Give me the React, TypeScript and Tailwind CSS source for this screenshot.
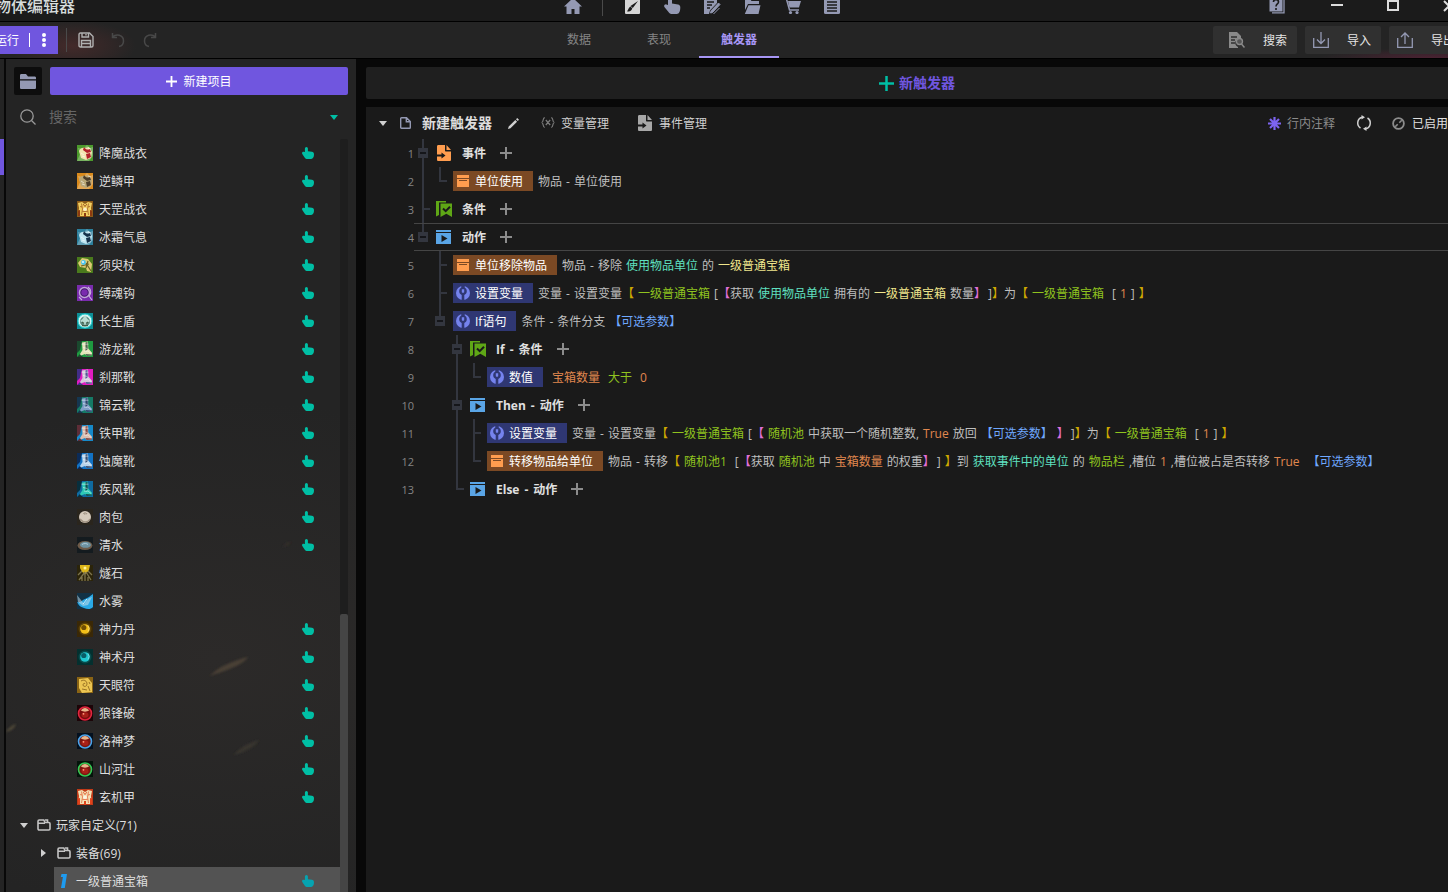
import { useState } from "react";
import type { ReactNode } from "react";

type ItemKind = "armor" | "boot" | "staff" | "ring" | "shield" | "bun" | "bowl" | "spark" | "wave" | "pill" | "scroll" | "orb" | "suit";

type Item = { name: string; kind: ItemKind; bg: string; main: string; accent: string; touch?: boolean };

const items: Item[] = [
  { name: "降魔战衣", kind: "armor", bg: "#4c9a2c", main: "#f3e3b0", accent: "#b3202a" },
  { name: "逆鳞甲", kind: "armor", bg: "#d98a1c", main: "#b9a777", accent: "#4b3d2a" },
  { name: "天罡战衣", kind: "suit", bg: "#8a5a18", main: "#f1cf62", accent: "#8c3a10" },
  { name: "冰霜气息", kind: "armor", bg: "#2c7f9c", main: "#bfe6f2", accent: "#16324c" },
  { name: "须臾杖", kind: "staff", bg: "#4a7a1c", main: "#dccb74", accent: "#49c5f2" },
  { name: "缚魂钩", kind: "ring", bg: "#7a2cae", main: "#c9b4dd", accent: "#3b1560" },
  { name: "长生盾", kind: "shield", bg: "#0e8f96", main: "#d8f5f2", accent: "#5c8a80" },
  { name: "游龙靴", kind: "boot", bg: "#1f9a40", main: "#e3e3b8", accent: "#1a3b2c" },
  { name: "刹那靴", kind: "boot", bg: "#e01cc0", main: "#d5c8dc", accent: "#24307c" },
  { name: "锦云靴", kind: "boot", bg: "#157a66", main: "#7f9fc8", accent: "#152a4c" },
  { name: "铁甲靴", kind: "boot", bg: "#1689c9", main: "#d9bfb2", accent: "#6b1d1d" },
  { name: "蚀魔靴", kind: "boot", bg: "#1272c4", main: "#b7d3ea", accent: "#0c1f44" },
  { name: "疾风靴", kind: "boot", bg: "#0f6aa0", main: "#2fc9b4", accent: "#07242c" },
  { name: "肉包", kind: "bun", bg: "#2a251d", main: "#d5cabb", accent: "#8a7c6b" },
  { name: "清水", kind: "bowl", bg: "#141b1f", main: "#6ea0b8", accent: "#6d5a48" },
  { name: "燧石", kind: "spark", bg: "#2b240a", main: "#f2c81b", accent: "#7d744e", touch: false },
  { name: "水雾", kind: "wave", bg: "#123246", main: "#2aa9e6", accent: "#c3dde8", touch: false },
  { name: "神力丹", kind: "pill", bg: "#3a2806", main: "#f2bf18", accent: "#5b3b00" },
  { name: "神术丹", kind: "pill", bg: "#04302f", main: "#1fc7cf", accent: "#064a55" },
  { name: "天眼符", kind: "scroll", bg: "#8a6414", main: "#ecc552", accent: "#7a5312" },
  { name: "狼锋破", kind: "orb", bg: "#1c0508", main: "#e0263f", accent: "#7a0c0c" },
  { name: "洛神梦", kind: "orb", bg: "#04101e", main: "#4aa5ea", accent: "#7c1710" },
  { name: "山河壮", kind: "orb", bg: "#04140a", main: "#35c955", accent: "#7c1710" },
  { name: "玄机甲", kind: "suit", bg: "#c03a18", main: "#f3e0b4", accent: "#e0431c" },
];

function ItemIcon({ kind, bg, main, accent }: Item) {
  let art: ReactNode = null;
  switch (kind) {
    case "armor":
      art = (
        <>
          <path d="M0 16 3 9 1 3l5 1 4-4 3 3 3-1v9l-4 5z" fill="#fff" opacity=".25" />
          <path d="M2 6c1-3 4-4 6-3l4-1 3 5-1 6-5 2-5-2z" fill={main} />
          <path d="M7 2c2 3 4 3 6 2l1 3-4 1-4-3zM9 9l4-1 1 4-4 2z" fill={accent} />
          <path d="M4 8l3 2M5 11l3 1M11 3l3 1" stroke="#fff" strokeWidth=".8" opacity=".7" />
        </>
      );
      break;
    case "suit":
      art = (
        <>
          <path d="M1 2l4-1 3 2 3-2 4 1-1 5 1 8H1l1-8z" fill={main} />
          <path d="M1 9.500 3 9v6H1zM15 9.500 13 9v6h2zM6 2.500 8 5l2-2.500v1L8 6 6 3.500zM7 12h2v4H7z" fill={accent} />
          <path d="M4.500 2.500 5.500 8 4.500 14M11.500 2.500 10.500 8l1 6M5.500 10.500h5M3 5.500l2 .5M13 5.500l-2 .5" stroke={accent} strokeWidth=".8" fill="none" opacity=".75" />
          <circle cx="8" cy="8.200" r="1.700" fill="#fff" opacity=".65" />
        </>
      );
      break;
    case "boot":
      art = (
        <>
          <path d="M0 0h5L3 9l-3 3zM0 16l3-3 3 3z" fill={accent} opacity=".85" />
          <path d="M5 1.500 11 .5l.3 7 3.700 4.200v2.800L9.500 15 8 13l-4 1.500-1-1.500 2.500-4z" fill={main} />
          <path d="M8.500 1.500 10.500 1l.3 7-2.300 2zM8.500 13l6.500.5v1L9.500 15z" fill={accent} opacity=".75" />
          <path d="M4.500 3.200h7M6 6.500l4.500 1M7 10l3.500.5M10.500 9.500l3.500 3" stroke="#fff" strokeWidth=".8" opacity=".6" />
        </>
      );
      break;
    case "staff":
      art = (
        <>
          <path d="M1 6 5 1l6 1 4 5-1 8-4-1-1-3-6-1z" fill={main} />
          <path d="M9 6l5 8M4 9l8-2M11 4l-2 7" stroke="#6d6325" strokeWidth="1.2" />
          <circle cx="6.500" cy="5.500" r="2.400" fill={accent} />
          <circle cx="6" cy="5" r=".9" fill="#fff" />
        </>
      );
      break;
    case "ring":
      art = (
        <>
          <circle cx="7.500" cy="7.500" r="5" fill={accent} stroke={main} strokeWidth="1.500" opacity=".9" />
          <circle cx="7.500" cy="7.500" r="3.200" fill={bg} />
          <path d="M11 2c4 3 3 7 1 9l3 4M2 12l3 3" stroke={main} strokeWidth="1.100" fill="none" />
        </>
      );
      break;
    case "shield":
      art = (
        <>
          <circle cx="8" cy="8" r="7" fill={main} stroke="#22d3d3" strokeWidth="1" />
          <circle cx="8" cy="8.500" r="5" fill={accent} />
          <path d="M8 2l2.500 4 2.500 2-3 2-2 4-2-4-3-2 2.500-2z" fill="#b8dcd2" />
          <path d="M5 9l2 1.500M11 9l-2 1.500M5 12.500h6" stroke="#3f5d4a" strokeWidth="1.300" />
        </>
      );
      break;
    case "bun":
      art = (
        <>
          <circle cx="8" cy="8" r="6" fill={main} />
          <path d="M3 10c3 4 8 4 10 0" stroke={accent} strokeWidth="1.500" fill="none" opacity=".7" />
          <path d="M8 3v2M6.500 4l1 1.500M10 4 9 5.500" stroke={accent} strokeWidth=".8" />
        </>
      );
      break;
    case "bowl":
      art = (
        <>
          <ellipse cx="8" cy="8.500" rx="7.500" ry="4.500" fill={accent} />
          <ellipse cx="8.500" cy="7.800" rx="5.500" ry="3" fill={main} opacity=".8" />
          <path d="M5 7.500c2-1.500 5-1 6 0" stroke="#c0dcea" strokeWidth=".8" fill="none" />
        </>
      );
      break;
    case "spark":
      art = (
        <>
          <path d="M3 0h10l-1 5-3 4-4-2-2-4z" fill={main} opacity=".9" />
          <path d="M8 7 2 15M8 8v8M9 7l5 8M5 6 1 10M11 6l4 4M5 12v4M11 12v4" stroke={accent} strokeWidth="1.300" />
          <circle cx="8" cy="3" r="1.500" fill="#fff39a" />
        </>
      );
      break;
    case "wave":
      art = (
        <>
          <path d="M0 9c4 1 5-2 8-3s5-3 8-5v13c-3 3-6 2-9 1S2 13 0 9z" fill={main} />
          <path d="M0 2l4 5 3 4 5-6 3-1-4 8-5 1-5-4z" fill={accent} opacity=".55" />
          <path d="M6 11l4-5" stroke="#fff" strokeWidth="1" opacity=".8" />
        </>
      );
      break;
    case "pill":
      art = (
        <>
          <circle cx="8" cy="8" r="6.500" fill={main} opacity=".18" />
          <circle cx="8" cy="8" r="4.800" fill={main} />
          <circle cx="6.800" cy="6.500" r="2.600" fill={accent} opacity=".85" />
          <path d="M11 4.500a5 5 0 0 1 0 6" stroke="#fff" strokeWidth=".8" opacity=".5" fill="none" />
        </>
      );
      break;
    case "scroll":
      art = (
        <>
          <path d="M2 2l9-1 4 5v9l-10 1-3-5z" fill={main} />
          <path d="M4 4c3-2 6 0 6 3s-4 3-4 1 2-2 2-1M11 9l2 5M5 12l5 1M12 5l1 2" stroke={accent} strokeWidth=".9" fill="none" opacity=".8" />
        </>
      );
      break;
    case "orb":
      art = (
        <>
          <circle cx="8" cy="8.500" r="6.500" fill={accent} stroke={main} strokeWidth="1.600" />
          <path d="M4 5.500C5.500 2 10.500 2 12 5.500c-2 1.500-6 1.500-8 0z" fill="#e8b48a" />
          <ellipse cx="8" cy="10" rx="3.500" ry="2.800" fill="#a82018" />
          <circle cx="6.500" cy="8.800" r=".9" fill="#ff9d80" />
        </>
      );
      break;
  }
  return (
    <svg viewBox="0 0 16 16" className="h-4 w-4 shrink-0" aria-hidden="true">
      <rect width="16" height="16" fill={bg} />
      {art}
    </svg>
  );
}

function Hand({ className }: { className: string }) {
  return (
    <svg viewBox="0 0 12 12" className={className} fill="currentColor" aria-hidden="true">
      <path d="M2.900 1.500a1.500 1.500 0 0 1 3 0V4.200l4 .6c1.300.2 2.100 1.200 2.100 2.500 0 2.700-1 4.700-2.800 4.700H5.400c-1.100 0-2-.5-2.800-1.600L.3 7C-.4 5.800.4 4.500 1.700 4.700l1.200.4Z" />
    </svg>
  );
}

function Plus({ className }: { className: string }) {
  return (
    <svg viewBox="0 0 12 12" className={className} fill="currentColor" aria-hidden="true">
      <path d="M5 0h2v5h5v2H7v5H5V7H0V5h5z" />
    </svg>
  );
}

function FolderOutline() {
  return (
    <svg viewBox="0 0 14 12" className="h-3 w-[14px] shrink-0" fill="none" stroke="#c4c4c4" strokeWidth="1.600" aria-hidden="true">
      <path d="M1 2.200C1 1.400 1.400 1 2.200 1H6.800L8 3.500h3.800c.8 0 1.200.4 1.200 1.200v5.100c0 .8-.4 1.200-1.200 1.200H2.200C1.400 11 1 10.600 1 9.800zM1 4.200h7M8 1h2.500v2.500" />
    </svg>
  );
}

/* ---------- title bar ---------- */

const navIcons: { label: string; art: ReactNode }[] = [
  {
    label: "地形",
    art: (
      <>
        <rect x="1" y="1" width="15" height="15" rx="1" fill="#d6d6d6" />
        <path d="M14 3 8.800 10 6.500 8zM6.300 8.500l2 1.800c-.5 2.400-2.400 3.600-5.300 2.900 1.400-.8 1.200-3.500 3.300-4.700z" fill="#1b1b1b" />
      </>
    ),
  },
  {
    label: "触发",
    art: <path d="M4 1.500a2 2 0 0 1 4 0V5.500l6 1c1.500.3 2.300 1.300 2.300 2.800 0 4-1.200 6.700-3.500 6.700H8c-1.500 0-2.500-.6-3.500-2L.4 9C-.4 7.500.8 6 2.400 6.400L4 7Z" />,
  },
  {
    label: "脚本",
    art: (
      <>
        <path d="M0 0h13v5L6 12.500 5 16H0z" />
        <path d="M3 4h7M3 7h5M3 10h3" stroke="#1b1b1b" strokeWidth="1.300" />
        <path d="M14.500 5 16 6.500 8.500 14.500 6.500 15l.6-2.200zM9.500 16l6-6" stroke="#9499b3" strokeWidth="1" />
      </>
    ),
  },
  {
    label: "资源",
    art: <path d="M1 1h5l1.500 2H15v3H4L1 12zM4.500 7.200H16.500L14.500 16H.8z" />,
  },
  {
    label: "商城",
    art: (
      <>
        <path d="M0 1.200h2.500L5.500 12H15" stroke="#9499b3" strokeWidth="1.500" fill="none" />
        <path d="M4 3h13l-2 6.500H5.500z" />
        <circle cx="6.500" cy="14.500" r="1.600" />
        <circle cx="13" cy="14.500" r="1.600" />
      </>
    ),
  },
  {
    label: "列表",
    art: (
      <>
        <rect width="16" height="16" rx="1.500" />
        <path d="M3 4h10M3 7h10M3 10h10M3 13h10" stroke="#1b1b1b" strokeWidth="1.300" />
      </>
    ),
  },
];

function TitleBar() {
  return (
    <header className="flex h-[22px] shrink-0 overflow-hidden border-b border-black bg-[#1b1b1b]">
      <div className="-mt-[10px] flex h-8 flex-1 items-center">
        <h1 className="-ml-[5px] w-[569px] shrink-0 text-base font-medium text-[#d6dcdc]">物体编辑器</h1>
        <button aria-label="主页" className="shrink-0 text-[#9499b3]">
          <svg viewBox="0 0 18 16" className="h-4 w-[18px]" fill="currentColor" aria-hidden="true">
            <path d="M9 0 18 8.500h-2.500V16h-5v-5h-3v5h-5V8.500H0z" />
          </svg>
        </button>
        <span className="ml-5 h-5 w-px bg-[#4a4a4a]" />
        <nav className="ml-[21px] flex gap-[23px]">
          {navIcons.map((n) => (
            <button key={n.label} aria-label={n.label} className="text-[#9499b3]">
              <svg viewBox="0 0 17 16" className="h-4 w-[17px]" fill="currentColor" aria-hidden="true">
                {n.art}
              </svg>
            </button>
          ))}
        </nav>
        <div className="mr-[13px] ml-auto flex items-center text-[#dcdcdc]">
          <button aria-label="帮助">
            <svg viewBox="0 0 16 16" className="h-4 w-4" fill="none" aria-hidden="true">
              <path d="M3 14.800h12V0" stroke="#9499b3" strokeWidth="1.300" />
              <rect x="0.500" width="13" height="13.500" fill="#9499b3" />
              <path d="M4.500 4c0-3 5-3 5 0 0 2-2.500 2-2.500 4.500M7 10v2" stroke="#1b1b1b" strokeWidth="1.600" />
            </svg>
          </button>
          <button aria-label="最小化" className="ml-[46px]">
            <svg viewBox="0 0 12 12" className="h-3 w-3" stroke="currentColor" strokeWidth="2" aria-hidden="true">
              <path d="M0 5h12" />
            </svg>
          </button>
          <button aria-label="最大化" className="ml-11">
            <svg viewBox="0 0 12 12" className="h-3 w-3" fill="none" stroke="currentColor" strokeWidth="2" aria-hidden="true">
              <path d="M1 1h10v9H1z" />
            </svg>
          </button>
          <button aria-label="关闭" className="ml-11">
            <svg viewBox="0 0 12 12" className="h-3 w-3" stroke="currentColor" strokeWidth="2" aria-hidden="true">
              <path d="M1 1l10 10M11 1 1 11" />
            </svg>
          </button>
        </div>
      </div>
    </header>
  );
}

/* ---------- toolbar ---------- */

const tabs = ["数据", "表现", "触发器"];

function Toolbar() {
  const [tab, setTab] = useState("触发器");
  return (
    <div className="flex h-[37px] shrink-0 border-b border-black bg-[#242424] bg-[radial-gradient(ellipse_64px_26px_at_72px_24px,#432a2a,transparent),radial-gradient(ellipse_110px_10px_at_1430px_36px,#4a2232,transparent)]">
      <div className="flex w-[539px] shrink-0 items-center">
        <div className="-ml-[21px] flex h-7 items-center bg-[#7056df] pl-4 text-xs/[17px] text-white">
          <button>运行</button>
          <span className="ml-[10px] h-[14px] w-px bg-white" />
          <button aria-label="更多" className="flex h-7 w-7 items-center justify-center">
            <svg viewBox="0 0 4 14" className="h-[14px] w-1" fill="currentColor" aria-hidden="true">
              <circle cx="2" cy="2" r="2" />
              <circle cx="2" cy="7" r="2" />
              <circle cx="2" cy="12" r="2" />
            </svg>
          </button>
        </div>
        <span className="ml-2 h-6 w-px bg-[#4a4a4a]" />
        <button aria-label="保存" className="ml-[11px] text-[#b0b0b0]">
          <svg viewBox="0 0 16 16" className="h-4 w-4" fill="none" stroke="currentColor" strokeWidth="1.400" aria-hidden="true">
            <path d="M1 2.500C1 1.500 1.500 1 2.500 1H11.500L15 4.500v9c0 1-.5 1.500-1.500 1.500h-11C1.500 15 1 14.500 1 13.500zM4 1v4h6.500V1M8 2v1.500M3.500 15V8.500h9V15M3.500 11.500h9" />
          </svg>
        </button>
        <button aria-label="撤销" className="ml-[17px] text-[#484848]">
          <svg viewBox="0 0 14 16" className="h-4 w-[14px]" fill="none" stroke="currentColor" strokeWidth="1.500" aria-hidden="true">
            <path d="M1.500 1v4.500H6M1.500 5C5 1.500 12.500 2.500 12.500 9c0 3-2 5-4.500 5.500" />
          </svg>
        </button>
        <button aria-label="重做" className="ml-[18px] text-[#484848]">
          <svg viewBox="0 0 14 16" className="h-4 w-[14px]" fill="none" stroke="currentColor" strokeWidth="1.500" aria-hidden="true">
            <path d="M12.500 1v4.500H8M12.500 5C9 1.500 1.500 2.500 1.500 9c0 3 2 5 4.500 5.500" />
          </svg>
        </button>
      </div>
      <nav className="flex">
        {tabs.map((t) => (
          <button
            key={t}
            onClick={() => setTab(t)}
            className={
              t === tab
                ? "w-20 border-b-2 border-[#a796f5] pt-[2px] text-xs font-bold text-[#a796f5]"
                : "w-20 border-b-2 border-transparent pt-[2px] text-xs text-[#858585]"
            }
          >
            {t}
          </button>
        ))}
      </nav>
      <div className="mr-[3px] ml-auto flex items-center gap-2 text-xs/[17px] text-[#e4e4e4]">
        <button className="flex h-7 items-center rounded-xs bg-[#303030] pr-[10px] pl-4">
          <svg viewBox="0 0 16 16" className="mr-[18px] h-4 w-4" fill="none" aria-hidden="true">
            <path d="M0 0h8l4 4v3a4 4 0 0 0-3 8v1H0z" fill="#8a8a8a" />
            <path d="M2 5h6M2 8h4M2 11h4" stroke="#303030" strokeWidth="1.300" />
            <circle cx="10.500" cy="9.500" r="3" stroke="#8a8a8a" strokeWidth="1.300" fill="#555" />
            <path d="m12.500 12 3 3.500" stroke="#8a8a8a" strokeWidth="1.500" />
          </svg>
          搜索
        </button>
        <button className="flex h-7 items-center rounded-xs bg-[#303030] pr-[10px] pl-2">
          <svg viewBox="0 0 16 16" className="mr-[18px] h-4 w-4" fill="none" stroke="#9499b3" strokeWidth="1.300" aria-hidden="true">
            <path d="M.7 6v9.300h14.600V6M8 0v11M4 7.500l4 4 4-4" />
          </svg>
          导入
        </button>
        <button className="flex h-7 items-center rounded-xs bg-[#303030] pr-[10px] pl-2">
          <svg viewBox="0 0 16 16" className="mr-[18px] h-4 w-4" fill="none" stroke="#9499b3" strokeWidth="1.300" aria-hidden="true">
            <path d="M.7 6v9.300h14.600V6M8 12V1M4 5l4-4 4 4" />
          </svg>
          导出
        </button>
      </div>
    </div>
  );
}

/* ---------- sidebar ---------- */

function Sidebar() {
  return (
    <aside className="relative flex w-[350px] shrink-0 flex-col bg-[#242424] bg-[radial-gradient(ellipse_420px_260px_at_60%_72%,#2c2a29,transparent)]">
      {/* faint embers behind the list */}
      <svg viewBox="0 0 350 833" className="absolute inset-x-0 top-0 w-full" aria-hidden="true">
        <defs>
          <filter id="soft">
            <feGaussianBlur stdDeviation="1.200" />
          </filter>
        </defs>
        <g filter="url(#soft)">
          <path d="M204 617c8-9 22-15 38-19-6 9-24 14-38 19z" fill="#4a4036" />
          <path d="M228 696c5-7 14-12 25-15-4 7-14 12-25 15z" fill="#39352f" />
          <path d="M0 672c3-3 6-6 10-7-2 5-5 7-10 8z" fill="#4d4637" />
          <path d="M276 488c3-3 6-5 9-5-2 3-5 4-9 5z" fill="#36302b" />
        </g>
      </svg>
      <div className="relative flex gap-2 px-2 pt-2">
        <button aria-label="文件夹" className="flex h-7 w-7 items-center justify-center rounded-xs bg-[#0d0d0d]">
          <svg viewBox="0 0 16 15" className="h-[15px] w-4" fill="#9499b3" aria-hidden="true">
            <path d="M0 1.500C0 .5.500 0 1.500 0H6l2 2.500h6.500c1 0 1.500.5 1.500 1.500v1.300H0zM0 6.500h16v7c0 1-.5 1.500-1.500 1.500h-13C.5 15 0 14.500 0 13.500z" />
          </svg>
        </button>
        <button className="flex h-7 flex-1 items-center justify-center gap-[6px] rounded-xs bg-[#7056df] text-xs/[17px] text-white">
          <Plus className="h-[11px] w-[11px]" />
          新建项目
        </button>
      </div>
      <div className="relative flex h-11 items-center pr-[18px] pl-[14px]">
        <svg viewBox="0 0 16 16" className="h-4 w-4" fill="none" stroke="#9a9a9a" strokeWidth="1.300" aria-hidden="true">
          <circle cx="7" cy="7" r="6.200" />
          <path d="m11.500 11.500 4 4" />
        </svg>
        <input aria-label="搜索" placeholder="搜索" className="ml-[13px] min-w-0 flex-1 bg-transparent text-sm text-[#d6d6d6] outline-none placeholder:text-[#666]" />
        <svg viewBox="0 0 8 5" className="h-[5px] w-2" fill="#00bfa5" aria-hidden="true">
          <path d="M0 0h8L4 5z" />
        </svg>
      </div>
      <div className="relative flex min-h-0 flex-1">
        <ul className="flex-1 overflow-hidden text-xs/[17px] text-[#dedede]">
          {items.map((it) => (
            <li key={it.name} className="flex h-7 items-center pr-[26px] pl-[71px]">
              <ItemIcon {...it} />
              <span className="ml-[6px] flex-1">{it.name}</span>
              {it.touch !== false && <Hand className="h-3 w-3 text-[#00bfa5]" />}
            </li>
          ))}
          <li className="flex h-7 items-center pl-[14px]">
            <svg viewBox="0 0 8 5" className="mr-[9px] h-[5px] w-2" fill="#d0d0d0" aria-hidden="true">
              <path d="M0 0h8L4 5z" />
            </svg>
            <FolderOutline />
            <span className="ml-[5px]">玩家自定义(71)</span>
          </li>
          <li className="flex h-7 items-center pl-[35px]">
            <svg viewBox="0 0 5 8" className="mr-[11px] h-2 w-[5px]" fill="#d0d0d0" aria-hidden="true">
              <path d="M0 0v8l5-4z" />
            </svg>
            <FolderOutline />
            <span className="ml-[5px]">装备(69)</span>
          </li>
          <li className="ml-12 flex h-7 items-center bg-[#535353] pr-[26px] pl-[6px]">
            <svg viewBox="0 0 8 14" className="h-[14px] w-2" fill="#1e9bf0" aria-hidden="true">
              <path d="M1.500 0H7L4.800 14H1L2.900 3H.8z" />
            </svg>
            <span className="ml-2 flex-1">一级普通宝箱</span>
            <Hand className="h-3 w-3 text-[#06a3b0]" />
          </li>
        </ul>
        <div className="mr-2 flex w-2 flex-col rounded-xs bg-[#1e1e1e]">
          <div className="flex-[475]" />
          <div className="flex-[278] rounded-t-xs bg-[#454545]" />
        </div>
      </div>
    </aside>
  );
}

/* ---------- trigger tree ---------- */

type Tree = "gap" | "line" | "tee" | "elbow" | "open" | "end";

const treePaths: Record<Tree, string> = {
  gap: "",
  line: "M8 0h2v28H8z",
  tee: "M8 0h2v28H8zM10 13h6v2h-6z",
  elbow: "M8 0h2v13h6v2H8z",
  open: "M8 0h2v28H8z",
  end: "M8 0h2v14H8z",
};

function TreeCell({ kind }: { kind: Tree }) {
  const box = kind === "open" || kind === "end";
  return (
    <svg viewBox="0 0 17 28" className="h-7 w-[17px] shrink-0" aria-hidden="true">
      <path d={treePaths[kind]} fill="#33363f" />
      {box && <path d="M4 9h10v10H4z" fill="#33363f" />}
      {box && <path d="M6 13h6v2H6z" fill="#15161a" />}
    </svg>
  );
}

function EventIcon({ className, ink }: { className: string; ink: string }) {
  return (
    <svg viewBox="0 0 16 16" className={className} fill="currentColor" aria-hidden="true">
      <path d="M1 1.500C1 .5 1.500 0 2.500 0H9v5.500c0 .6.400 1 1 1h5v8c0 1-.5 1.500-1.500 1.500h-11C1.500 16 1 15.500 1 14.500zM10.500 0 15 5h-4.500z" />
      <path d="M0 9.500h5.500V7.500L9.500 10.500 5.500 13.500v-2H0z" fill={ink} />
    </svg>
  );
}

function ConditionIcon() {
  return (
    <svg viewBox="0 0 16 16" className="h-4 w-4" fill="#5fa716" aria-hidden="true">
      <path d="M0 0h10v1.500H3V14l-3 1.500z" />
      <path d="M4.500 2.500H16V16l-5.700-3.200L4.500 16z" />
      <path d="m7 7.500 2.700 2.700L14 5.800" fill="none" stroke="#1a1a1a" strokeWidth="2" />
    </svg>
  );
}

function ActionIcon() {
  return (
    <svg viewBox="0 0 16 16" className="h-4 w-4" fill="#5aa5e6" aria-hidden="true">
      <path d="M0 1h15v2H0zM0 4h15v11H0z" />
      <path d="M5.500 6v7l6-3.500z" fill="#1a1a1a" />
    </svg>
  );
}

const sectionIcons: Record<string, ReactNode> = {
  event: <EventIcon className="h-4 w-4 text-[#ff9d4f]" ink="#1a1a1a" />,
  condition: <ConditionIcon />,
  action: <ActionIcon />,
};

const t = {
  plain: "text-[#bfbfbf]",
  teal: "text-[#5fe0c0]",
  yellow: "text-[#f0e68c]",
  green: "text-[#8fc31f]",
  orange: "text-[#e0884f]",
  blue: "text-[#6fa8ff]",
  gold: "text-[#cda800]",
  pink: "text-[#e070d8]",
};

// [text, colour, margin]
type Token = [string, string, string?];

type Row = { tree: Tree[]; active?: boolean } & (
  | { section: "event" | "condition" | "action"; label: string }
  | { tag: "item" | "var"; label: string; tokens: Token[]; lead?: string }
);

const rows: Row[] = [
  { tree: ["open"], section: "event", label: "事件" },
  { tree: ["line", "elbow"], tag: "item", label: "单位使用", tokens: [["物品", t.plain], ["-", t.plain, "ml-1"], ["单位使用", t.plain, "ml-1"]] },
  { tree: ["tee"], section: "condition", label: "条件" },
  { tree: ["end"], section: "action", label: "动作", active: true },
  {
    tree: ["gap", "tee"],
    tag: "item",
    label: "单位移除物品",
    tokens: [
      ["物品", t.plain],
      ["-", t.plain, "ml-1"],
      ["移除", t.plain, "ml-1"],
      ["使用物品单位", t.teal, "ml-1"],
      ["的", t.plain, "ml-1"],
      ["一级普通宝箱", t.yellow, "ml-1"],
    ],
  },
  {
    tree: ["gap", "tee"],
    tag: "var",
    label: "设置变量",
    tokens: [
      ["变量", t.plain],
      ["-", t.plain, "ml-1"],
      ["设置变量", t.plain, "ml-1"],
      ["【", t.gold],
      ["一级普通宝箱", t.green, "ml-1"],
      ["[", t.plain, "ml-1"],
      ["【", t.pink],
      ["获取", t.plain],
      ["使用物品单位", t.teal, "ml-1"],
      ["拥有的", t.plain, "ml-1"],
      ["一级普通宝箱", t.yellow, "ml-1"],
      ["数量", t.plain, "ml-1"],
      ["】", t.pink],
      ["]", t.plain, "ml-0.5"],
      ["】", t.gold],
      ["为", t.plain],
      ["【", t.gold],
      ["一级普通宝箱", t.green, "ml-1"],
      ["[", t.plain, "ml-2"],
      ["1", t.orange, "ml-1"],
      ["]", t.plain, "ml-1"],
      ["】", t.gold, "ml-1"],
    ],
  },
  {
    tree: ["gap", "end"],
    tag: "var",
    label: "If语句",
    tokens: [["条件", t.plain], ["-", t.plain, "ml-1"], ["条件分支", t.plain, "ml-1"], ["【可选参数】", t.blue, "ml-1"]],
  },
  { tree: ["gap", "gap", "open"], section: "condition", label: "If - 条件" },
  {
    tree: ["gap", "gap", "line", "elbow"],
    tag: "var",
    label: "数值",
    lead: "ml-2",
    tokens: [["宝箱数量", t.orange], ["大于", t.green, "ml-2"], ["0", t.orange, "ml-2"]],
  },
  { tree: ["gap", "gap", "open"], section: "action", label: "Then - 动作" },
  {
    tree: ["gap", "gap", "line", "tee"],
    tag: "var",
    label: "设置变量",
    tokens: [
      ["变量", t.plain],
      ["-", t.plain, "ml-1"],
      ["设置变量", t.plain, "ml-1"],
      ["【", t.gold],
      ["一级普通宝箱", t.green, "ml-1"],
      ["[", t.plain, "ml-1"],
      ["【", t.pink],
      ["随机池", t.green, "ml-1"],
      ["中获取一个随机整数,", t.plain, "ml-1"],
      ["True", t.orange, "ml-1"],
      ["放回", t.plain, "ml-1"],
      ["【可选参数】", t.blue, "ml-1"],
      ["】", t.pink, "ml-1"],
      ["]", t.plain, "ml-0.5"],
      ["】", t.gold],
      ["为", t.plain],
      ["【", t.gold],
      ["一级普通宝箱", t.green, "ml-1"],
      ["[", t.plain, "ml-2"],
      ["1", t.orange, "ml-1"],
      ["]", t.plain, "ml-1"],
      ["】", t.gold, "ml-1"],
    ],
  },
  {
    tree: ["gap", "gap", "line", "elbow"],
    tag: "item",
    label: "转移物品给单位",
    tokens: [
      ["物品", t.plain],
      ["-", t.plain, "ml-1"],
      ["转移", t.plain, "ml-1"],
      ["【", t.gold],
      ["随机池1", t.green, "ml-1"],
      ["[", t.plain, "ml-2"],
      ["【", t.pink],
      ["获取", t.plain],
      ["随机池", t.green, "ml-1"],
      ["中", t.plain, "ml-1"],
      ["宝箱数量", t.orange, "ml-1"],
      ["的权重", t.plain, "ml-1"],
      ["】", t.pink],
      ["]", t.plain, "ml-0.5"],
      ["】", t.gold, "ml-1"],
      ["到", t.plain],
      ["获取事件中的单位", t.teal, "ml-1"],
      ["的", t.plain, "ml-1"],
      ["物品栏", t.green, "ml-1"],
      [",槽位", t.plain, "ml-1"],
      ["1", t.orange, "ml-1"],
      [",槽位被占是否转移", t.plain, "ml-1"],
      ["True", t.orange, "ml-1"],
      ["【可选参数】", t.blue, "ml-2"],
    ],
  },
  { tree: ["gap", "gap", "elbow"], section: "action", label: "Else - 动作" },
];

function Tag({ kind, label }: { kind: "item" | "var"; label: string }) {
  return (
    <span
      className={
        kind === "item"
          ? "flex h-5 items-center bg-[#7b4924] pr-[10px] pl-1 text-white"
          : "flex h-5 items-center bg-[#2f3773] pr-[10px] pl-[3px] text-white"
      }
    >
      {kind === "item" ? (
        <svg viewBox="0 0 12 12" className="mr-[6px] h-3 w-3" fill="#ff9d4f" aria-hidden="true">
          <path d="M0 0h12v3H0zM0 4h12v8H0z" />
          <path d="M2 5.500h8" stroke="#7b4924" strokeWidth="1" />
        </svg>
      ) : (
        <svg viewBox="0 0 14 14" className="mr-[5px] h-[14px] w-[14px]" aria-hidden="true">
          <circle cx="7" cy="7" r="7" fill="#7583ee" />
          {/* wrench cut out of the disc */}
          <path d="M5.300 0v1.600C4 2.400 3.200 3.500 3.200 5.200c0 1.700.9 3 2.500 3.700V14h2.600V8.900c1.600-.7 2.500-2 2.500-3.700 0-1.700-.8-2.800-2.100-3.600V0z" fill="#2f3773" />
          <path d="M5.800 3.200h2.400v3L7 7 5.800 6.200z" fill="#7583ee" />
        </svg>
      )}
      {label}
    </span>
  );
}

function TriggerRow({ row, index }: { row: Row; index: number }) {
  return (
    <li className="flex h-7 text-xs/[17px]">
      <span className="flex w-12 shrink-0 items-center justify-end text-[11px]/[17px] text-[#858585]">{index}</span>
      <div className={row.active ? "relative flex flex-1 items-center before:absolute before:inset-x-0 before:top-0 before:h-7 before:border-y before:border-[#454545]" : "flex flex-1 items-center"}>
        {row.tree.map((k, i) => (
          <TreeCell key={i} kind={k} />
        ))}
        {"section" in row ? (
          <div className="ml-[5px] flex items-center">
            {sectionIcons[row.section]}
            <span className="ml-[10px] flex gap-[5px] font-bold text-[#e0e0e0]">
              {row.label.split(" ").map((word) => (
                <span key={word}>{word}</span>
              ))}
            </span>
            <button aria-label={"添加" + row.label} className="relative ml-[14px] text-[#8c8c8c]">
              <Plus className="h-3 w-3" />
            </button>
          </div>
        ) : (
          <div className="ml-[5px] flex items-center whitespace-pre">
            <Tag kind={row.tag} label={row.label} />
            <p className={row.lead ? "ml-[9px] flex" : "ml-[5px] flex"}>
              {row.tokens.map(([text, color, margin], i) => (
                <span key={i} className={margin ? color + " " + margin : color}>
                  {text}
                </span>
              ))}
            </p>
          </div>
        )}
      </div>
    </li>
  );
}

function TriggerPanel() {
  return (
    <section className="flex min-w-0 flex-1 flex-col bg-[#1a1a1a]">
      <div className="flex h-8 shrink-0 items-center pr-5 pl-[13px] text-xs/[17px] text-[#d0d0d0]">
        <svg viewBox="0 0 8 5" className="h-[5px] w-2" fill="currentColor" aria-hidden="true">
          <path d="M0 0h8L4 5z" />
        </svg>
        <svg viewBox="0 0 11 12" className="ml-[13px] h-3 w-[11px]" fill="none" stroke="#9499b3" strokeWidth="1.400" aria-hidden="true">
          <path d="M.7 1.500c0-.5.300-.8.800-.8H6.500L10.300 4.500v6c0 .5-.3.800-.8.800h-8c-.5 0-.8-.3-.8-.8zM6.300.7v4h4" />
        </svg>
        <h2 className="ml-[11px] text-sm font-bold text-[#dcdcdc]">新建触发器</h2>
        <button aria-label="重命名" className="ml-4">
          <svg viewBox="0 0 11 11" className="h-[11px] w-[11px]" fill="currentColor" aria-hidden="true">
            <path d="M0 11 .7 8.500 7.300 1.900 9.100 3.700 2.500 10.300zM8 1.200 9.200 0 11 1.800 9.800 3z" />
          </svg>
        </button>
        <button className="ml-[22px] flex items-center">
          <svg viewBox="0 0 14 12" className="mr-[6px] h-3 w-[14px]" fill="none" stroke="#7c7c7c" strokeWidth="1.200" aria-hidden="true">
            <path d="M3.800.6C1.300.6 3 5 .7 5.500 3 6 1.300 10.400 3.800 10.400M10.200.6c2.500 0 .8 4.400 3.100 4.900-2.300.5-.6 4.900-3.100 4.900M4.800 3l4.400 5M9.200 3 4.800 8" />
          </svg>
          变量管理
        </button>
        <button className="ml-7 flex items-center gap-[6px]">
          <EventIcon className="h-4 w-4 text-[#a8a8a8]" ink="#1a1a1a" />
          事件管理
        </button>
        <div className="ml-auto flex items-center">
          <button className="flex items-center gap-[6px] text-[#8c8c8c]">
            <svg viewBox="0 0 13 13" className="h-[13px] w-[13px]" stroke="#7d64f0" strokeWidth="2.200" aria-hidden="true">
              <path d="M6.500 0v13M0 6.500h13M2 2l9 9M11 2l-9 9" />
            </svg>
            行内注释
          </button>
          <button aria-label="刷新" className="ml-[21px]">
            <svg viewBox="0 0 16 16" className="h-4 w-4" fill="none" stroke="currentColor" strokeWidth="1.500" aria-hidden="true">
              <path d="M6 2.200A6 6 0 0 0 4.500 13M10 13.800A6 6 0 0 0 11.500 3" />
              <path d="M5.500 0 9 2.200 5.500 4.600zM10.500 11.400 7 13.800l3.500 2.200z" fill="currentColor" stroke="none" />
            </svg>
          </button>
          <button className="ml-5 flex items-center gap-[7px] text-[#e0e0e0]">
            <svg viewBox="0 0 13 13" className="h-[13px] w-[13px]" fill="none" stroke="#8c8c8c" strokeWidth="1.800" aria-hidden="true">
              <circle cx="6.500" cy="6.500" r="5.400" />
              <path d="M9.800 3.200 7.300 5.700M3.200 9.800 5.700 7.300" strokeWidth="1.600" />
            </svg>
            已启用
          </button>
        </div>
      </div>
      <ol>
        {rows.map((r, i) => (
          <TriggerRow key={i} row={r} index={i + 1} />
        ))}
      </ol>
    </section>
  );
}

export default function App() {
  return (
    <div lang="zh-CN" className="h-screen overflow-hidden bg-[#080808] font-['Open_Sans','Noto_Sans_CJK_SC',sans-serif]">
      <div className="-mr-5 flex h-full flex-col">
        <TitleBar />
        <Toolbar />
        <div className="flex min-h-0 flex-1">
          <div className="mr-[2px] w-1 shrink-0 bg-[#242424] pt-20">
            <div className="h-9 bg-[#7056df]" />
          </div>
          <Sidebar />
          <main className="ml-[10px] flex min-w-0 flex-1 flex-col gap-2 pt-2">
            <button className="flex h-8 shrink-0 items-center justify-center gap-[5px] rounded-xs bg-[#1f1f1f] text-sm font-bold text-[#7056df]">
              <Plus className="h-[15px] w-[15px] text-[#00bfa5]" />
              新触发器
            </button>
            <TriggerPanel />
          </main>
        </div>
      </div>
    </div>
  );
}
